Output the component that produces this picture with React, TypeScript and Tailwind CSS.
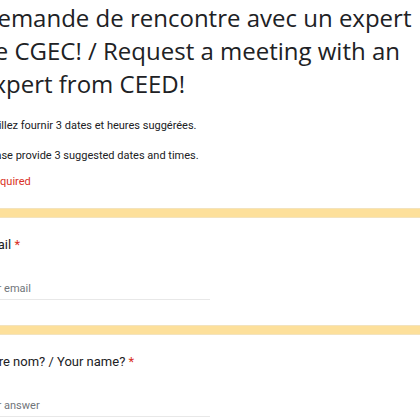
import React from "react";

function Band() {
	return <div className="h-[10px] w-full bg-[#fde09b] border-y border-[#f3e3bd]" />;
}

function Question({ label, placeholder }: { label: string; placeholder: string }) {
	return (
		<div className="ml-[-1px] pt-[17px]">
			<p className="text-[13px] leading-[20px] text-[#202124] font-['Roboto',sans-serif]">
				{label} <span className="text-[#d93025]">*</span>
			</p>
			<div className="mt-[26px] w-[231px] border-b border-[#e8e8e8] pb-[2px]">
				<span className="block text-[11px] leading-[16px] text-[#70757a] font-['Roboto',sans-serif]">
					{placeholder}
				</span>
			</div>
		</div>
	);
}

export default function App() {
	return (
		<div className="w-[420px] h-[420px] overflow-hidden bg-white">
			<div className="ml-[-20px] w-[460px]">
				{/* Title */}
				<div className="pt-[1px]">
					<h1 className="text-[24px] leading-[33px] text-[#202124] font-['Open_Sans',sans-serif] whitespace-nowrap">
						Demande de rencontre avec un expert
						<br />
						de CGEC! / Request a meeting with an
						<br />
						expert from CEED!
					</h1>
					<div className="mt-[18px] text-[11px] leading-[16px] text-[#202124] font-['Roboto',sans-serif]">
						<p>Veuillez fournir 3 dates et heures suggérées.</p>
						<p className="mt-[14px]">Please provide 3 suggested dates and times.</p>
					</div>
					<p className="mt-[10px] mb-[18px] text-[11px] leading-[16px] text-[#d93025] font-['Roboto',sans-serif]">
						* Required
					</p>
				</div>
				<Band />
				<Question label="Email" placeholder="Your email" />
				<div className="h-[25px]" />
				<Band />
				<Question label="Votre nom? / Your name?" placeholder="Your answer" />
			</div>
		</div>
	);
}
